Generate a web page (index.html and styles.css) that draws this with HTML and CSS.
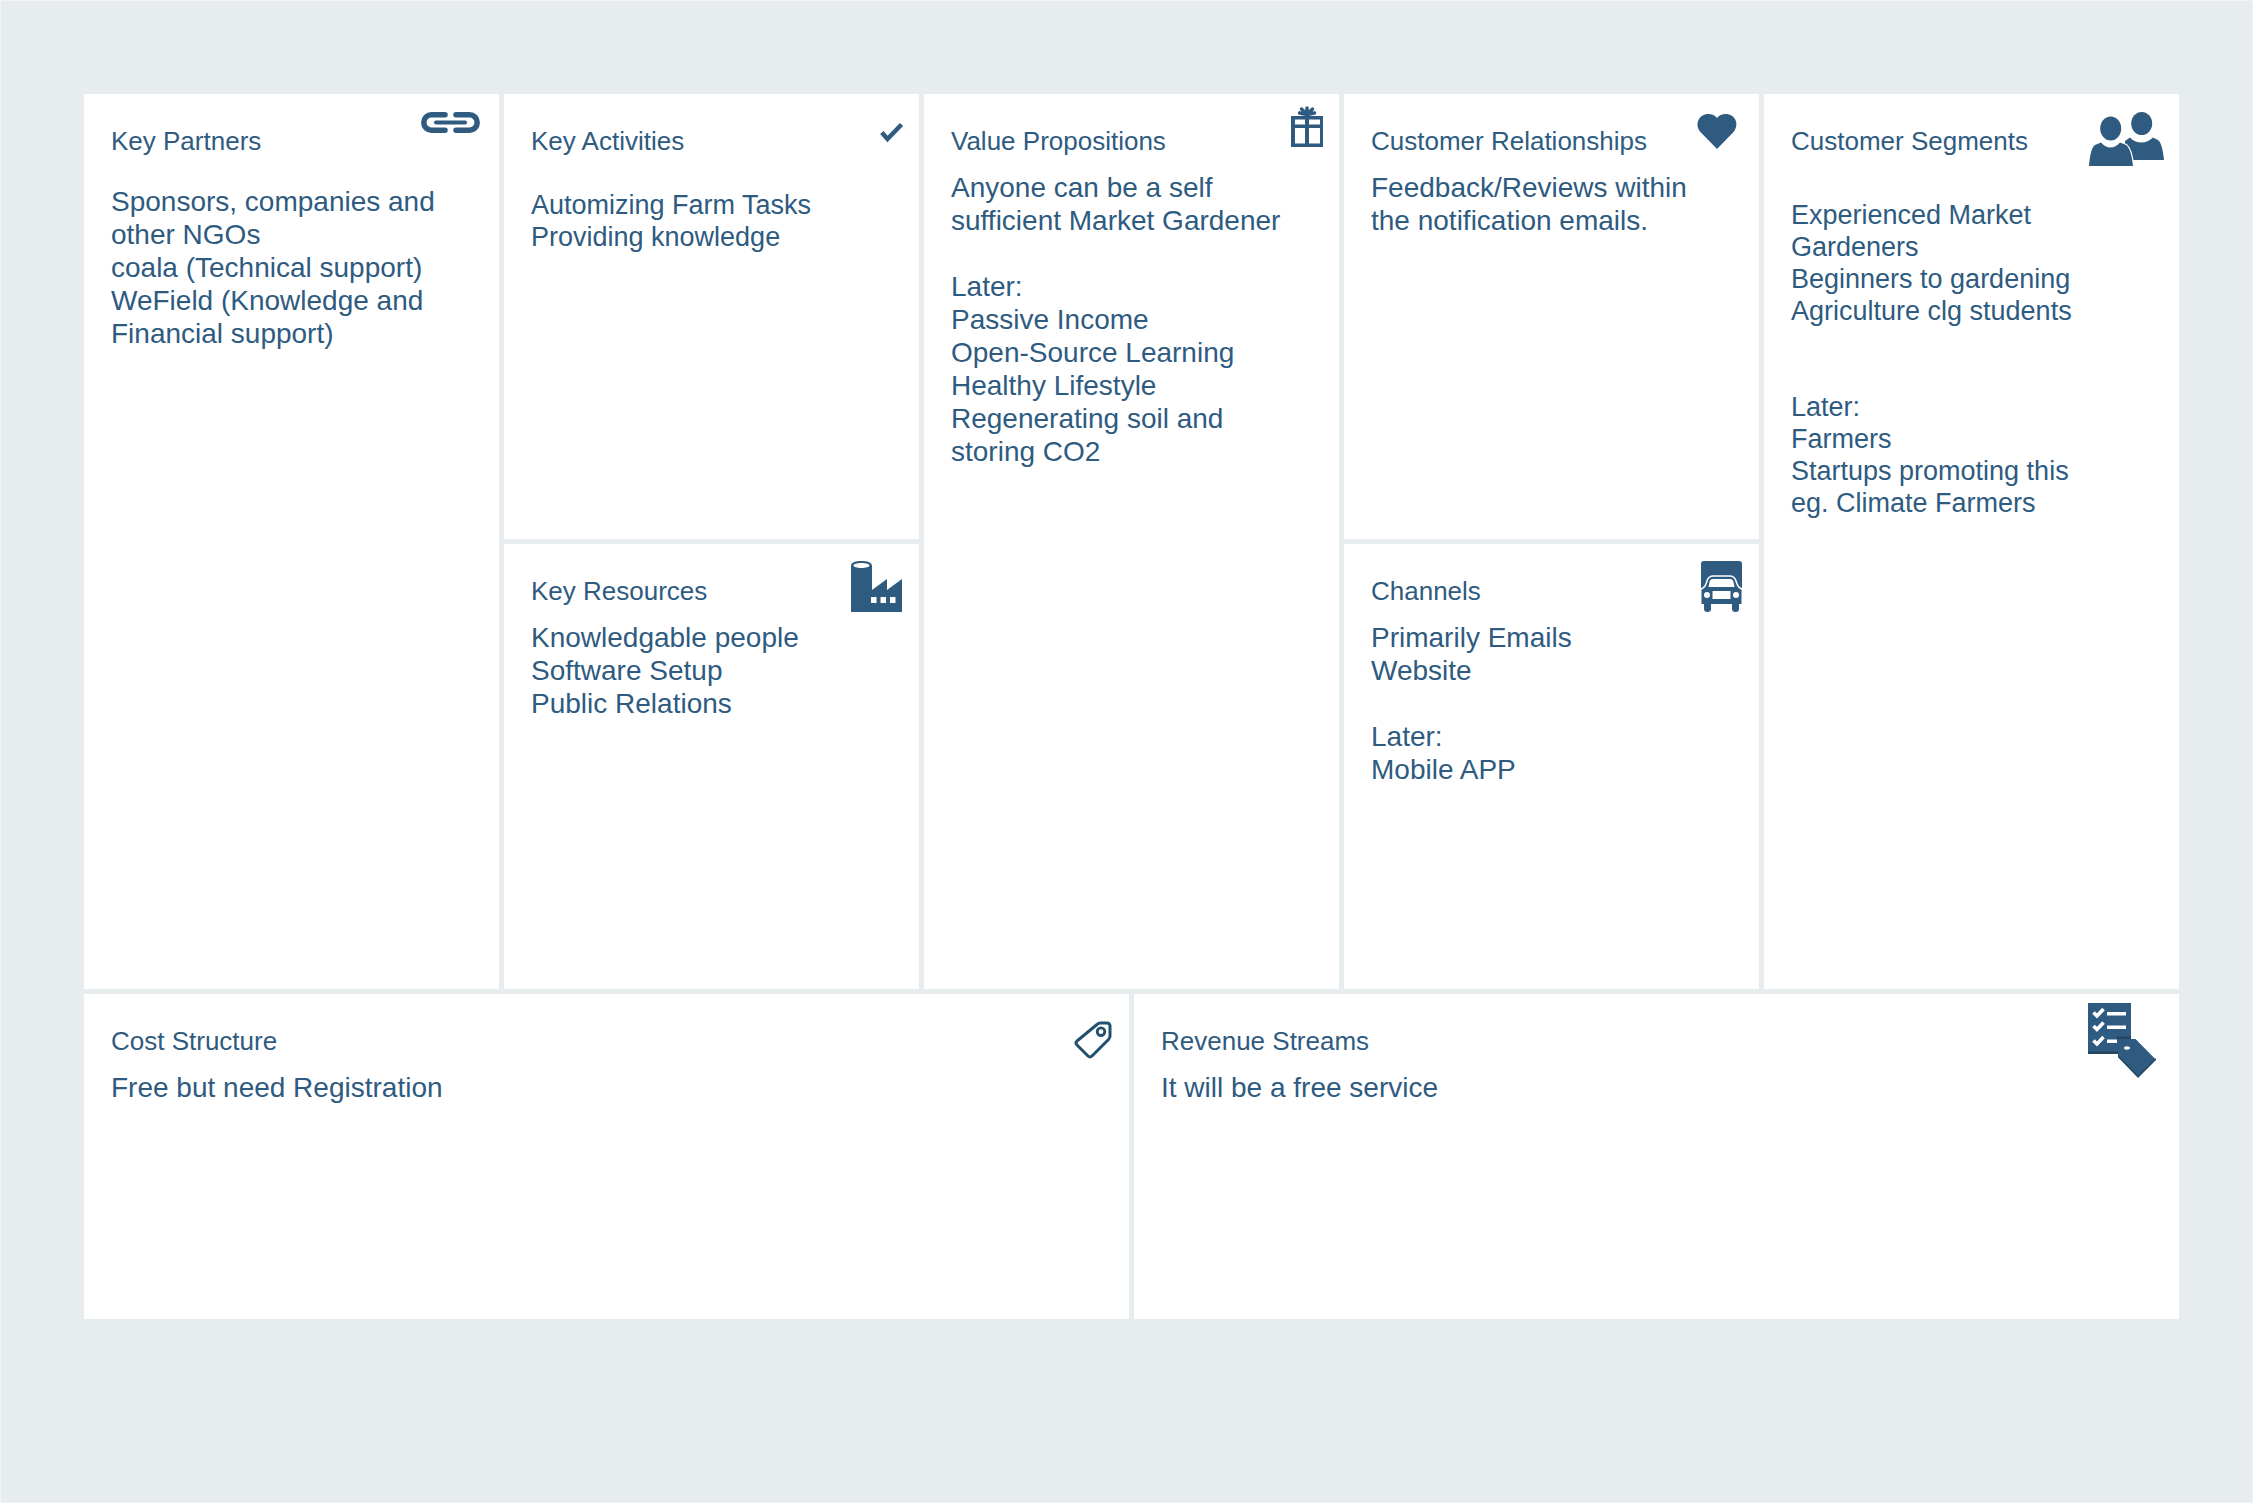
FILE: index.html
```html
<!DOCTYPE html>
<html lang="en">
<head>
<meta charset="utf-8">
<title>Business Model Canvas</title>
<link rel="stylesheet" href="styles.css">
</head>
<body>
<main class="frame">
  <div class="canvas">
    <section class="card key-partners">
      <h2 class="label">Key Partners</h2>
      <p class="text gap-partners">Sponsors, companies and<br>other NGOs<br>coala (Technical support)<br>WeField (Knowledge and<br>Financial support)</p>
      <svg class="icon icon-link" viewBox="0 0 59 21"><path class="line" d="M24 2.800H10.500a7.700 7.700 0 0 0 0 15.400H24M35 2.800H48.500a7.700 7.700 0 0 1 0 15.400H35"/><path class="line thin" d="M15 10.500H44"/></svg>
    </section>
    <section class="card key-activities">
      <h2 class="label">Key Activities</h2>
      <p class="text small gap-activities">Automizing Farm Tasks<br>Providing knowledge</p>
      <svg class="icon icon-check" viewBox="0 0 23 21"><path class="line square" d="M1.800 10.500L7.500 17L21.500 2.500"/></svg>
    </section>
    <section class="card key-resources">
      <h2 class="label">Key Resources</h2>
      <p class="text gap-normal">Knowledgable people<br>Software Setup<br>Public Relations</p>
      <svg class="icon icon-factory" viewBox="0 0 51 51"><path class="solid" fill-rule="evenodd" d="M0 5C0 1 5 0 10.500 0S21 1 21 5V29L36 18V29L51 18V51H0ZM2.500 4.500C2.500 6 6 7 10.500 7S18.500 6 18.500 4.500 15 2 10.500 2 2.500 3 2.500 4.500ZM20 36v6h5.500v-6ZM29.500 36v6h5.500v-6ZM39 36v6h5.500v-6Z"/></svg>
    </section>
    <section class="card value">
      <h2 class="label">Value Propositions</h2>
      <p class="text gap-normal">Anyone can be a self<br>sufficient Market Gardener<br><br>Later:<br>Passive Income<br>Open-Source Learning<br>Healthy Lifestyle<br>Regenerating soil and<br>storing CO2</p>
      <svg class="icon icon-gift" viewBox="0 0 32 41"><path class="solid" fill-rule="evenodd" d="M0 10H32V41H0ZM4 13.500v5h10v-5ZM18 13.500v5h11v-5ZM4 22v15.500h10V22ZM18 22v15.500h11V22Z"/><path class="line bow" d="M16 8.500V2M16 8.500L10.500 3M16 8.500L21.500 3M16 8.500L8.500 7M16 8.500L23.500 7"/></svg>
    </section>
    <section class="card relationships">
      <h2 class="label">Customer Relationships</h2>
      <p class="text gap-normal">Feedback/Reviews within<br>the notification emails.</p>
      <svg class="icon icon-heart" viewBox="0 0 40 35"><path class="solid" d="M20 35L3 17.500C-3 9 3 0 11 0C15 0 18 1.500 20 4C22 1.500 25 0 29 0C37 0 43 9 37 17.500Z"/></svg>
    </section>
    <section class="card channels">
      <h2 class="label">Channels</h2>
      <p class="text gap-normal">Primarily Emails<br>Website<br><br>Later:<br>Mobile APP</p>
      <svg class="icon icon-truck" viewBox="0 0 41 51"><path class="solid" d="M3 0H38a3 3 0 0 1 3 3V28H0V3a3 3 0 0 1 3-3Z"/><path class="solid" d="M0.500 28H40.500V43H38V48a3.500 3 0 0 1-7 0V43H10V48a3.500 3 0 0 1-7 0V43H0.500Z"/><path class="truck-arch" d="M0 28C3.500 27 5 24 6 20C7 16.500 9 15 12.500 15H28.500C32 15 34 16.500 35 20C36 24 37.500 27 41 28"/><path class="white" d="M12 18H29C31 18 32 19 32.500 21L33.500 26H7.500L8.500 21C9 19 10 18 12 18Z"/><rect class="white" x="11.500" y="30" width="18" height="8"/><circle class="white" cx="6" cy="34" r="3"/><circle class="white" cx="35" cy="34" r="3"/></svg>
    </section>
    <section class="card segments">
      <h2 class="label">Customer Segments</h2>
      <p class="text small gap-segments">Experienced Market<br>Gardeners<br>Beginners to gardening<br>Agriculture clg students<br><br><br>Later:<br>Farmers<br>Startups promoting this<br>eg. Climate Farmers</p>
      <svg class="icon icon-people" viewBox="0 0 75 54"><ellipse class="solid" cx="52.700" cy="11.500" rx="10.500" ry="11.500"/><path class="solid" d="M36 40V29L41 25.500C44 29 48 30.500 52.500 30.500S60 29 64 25.500L69 28C72 30 74 38 75 48H40Z"/><path class="solid outlined" d="M0 54C1 44 2 36 6 33L12 30.500C15 34 18 35.500 21.500 35.500S28 34 31 30.500L37 33C41 36 43 44 44 54Z"/><ellipse class="solid" cx="21.700" cy="16.500" rx="10.500" ry="12"/></svg>
    </section>
    <section class="card cost">
      <h2 class="label">Cost Structure</h2>
      <p class="text gap-normal">Free but need Registration</p>
      <svg class="icon icon-tag" viewBox="0 0 38 38"><path class="line tag-line" d="M23 3.500Q24.500 2 26.500 2H33a3 3 0 0 1 3 3V15Q36 17 34.500 18.500L18 35Q16 37 14 35L3 24Q1 22 3 20Z"/><circle class="line tag-hole" cx="27" cy="10.700" r="3.800"/></svg>
    </section>
    <section class="card revenue">
      <h2 class="label">Revenue Streams</h2>
      <p class="text gap-normal">It will be a free service</p>
      <svg class="icon icon-list" viewBox="0 0 68 74"><rect class="solid" width="43" height="51"/><rect class="dark" y="48.500" width="43" height="2.500"/><path class="tick" d="M5.500 9.500l3.500 3.500 6.500-7M5.500 23l3.500 3.500 6.500-7M5.500 37.500l3.500 3.500 6.500-7"/><path class="white" d="M19 9H38V12.500H19ZM19 22.500H38V26H19ZM19 36.500H29V40H19Z"/><path class="solid" d="M30 36H47.500L68 56.700L50 74.700L30 54Z"/><path class="dark" d="M29 33.500H43V36H29ZM30 52L50 72.700L68 55V56.700L50 74.700L30 54Z"/><ellipse class="white" cx="39" cy="45" rx="3" ry="1.700"/></svg>
    </section>
  </div>
</main>
</body>
</html>
```

FILE: styles.css
```css
* { box-sizing: border-box; }
html, body { margin: 0; padding: 0; }
body { font-family: "Liberation Sans", Arial, sans-serif; color: #2e5b7f; }
.frame {
  width: 2253px;
  height: 1503px;
  padding: 93px 73px 0 83px;
  background: #e7ecef;
  border: 1px solid #f1f3f5;
}
.canvas {
  display: grid;
  grid-template-columns: repeat(10, 205px);
  grid-template-rows: 445px 445px 325px;
  gap: 5px;
}
.card { position: relative; background: #fff; padding: 27px; }
.label { margin: 0; font-size: 26px; line-height: 40px; font-weight: 400; }
.text { margin: 0; font-size: 28px; line-height: 33px; white-space: nowrap; }
.small { font-size: 27px; line-height: 32px; }
.gap-normal { margin-top: 10px; }
.gap-partners { margin-top: 24px; }
.gap-activities { margin-top: 28px; }
.gap-segments { margin-top: 38px; }
.key-partners { grid-column: 1 / span 2; grid-row: 1 / span 2; }
.key-activities { grid-column: 3 / span 2; grid-row: 1; }
.key-resources { grid-column: 3 / span 2; grid-row: 2; }
.value { grid-column: 5 / span 2; grid-row: 1 / span 2; }
.relationships { grid-column: 7 / span 2; grid-row: 1; }
.channels { grid-column: 7 / span 2; grid-row: 2; }
.segments { grid-column: 9 / span 2; grid-row: 1 / span 2; }
.cost { grid-column: 1 / span 5; grid-row: 3; }
.revenue { grid-column: 6 / span 5; grid-row: 3; }
.icon { position: absolute; display: block; overflow: visible; }
.solid { fill: #2e5b7f; }
.white { fill: #fff; }
.dark { fill: #24475f; }
.line { fill: none; stroke: #2e5b7f; stroke-width: 5.500; stroke-linecap: round; }
.thin { stroke-width: 4; }
.square { stroke-linecap: butt; stroke-width: 4.500; }
.bow { stroke-width: 3.500; }
.tag-line { stroke: #22506f; stroke-width: 3; stroke-linejoin: round; }
.tag-hole { stroke: #22506f; stroke-width: 2.800; }
.tick { fill: none; stroke: #fff; stroke-width: 3.600; }
.outlined { stroke: #fff; stroke-width: 2.500; paint-order: stroke; }
.truck-arch { fill: none; stroke: #fff; stroke-width: 1.500; }
.icon-link { width: 59px; height: 21px; top: 18px; right: 19px; }
.icon-check { width: 23px; height: 21px; top: 28px; right: 16px; }
.icon-factory { width: 51px; height: 51px; top: 17px; right: 17px; }
.icon-gift { width: 32px; height: 41px; top: 12px; right: 16px; }
.icon-heart { width: 40px; height: 35px; top: 20px; right: 22px; }
.icon-truck { width: 41px; height: 51px; top: 17px; right: 17px; }
.icon-people { width: 75px; height: 54px; top: 18px; right: 15px; }
.icon-tag { width: 38px; height: 38px; top: 27px; right: 17px; }
.icon-list { width: 68px; height: 74px; top: 9px; right: 23px; }
```
